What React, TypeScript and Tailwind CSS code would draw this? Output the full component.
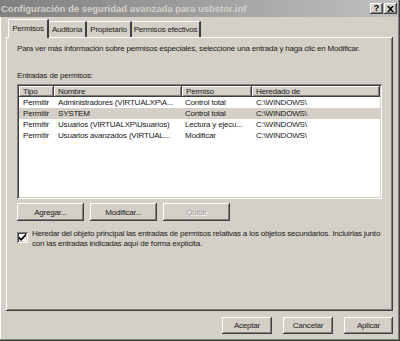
import React from 'react';

const raised =
  'shadow-[inset_-1px_-1px_#404040,inset_1px_1px_#ffffff,inset_-2px_-2px_#808080,inset_2px_2px_#d4d0c8]';
const sunken =
  'shadow-[inset_1px_1px_#808080,inset_-1px_-1px_#ffffff,inset_2px_2px_#404040,inset_-2px_-2px_#d4d0c8]';

const rows = [
  { tipo: 'Permitir', nombre: 'Administradores (VIRTUALXP\\A...', permiso: 'Control total', heredado: 'C:\\WINDOWS\\' },
  { tipo: 'Permitir', nombre: 'SYSTEM', permiso: 'Control total', heredado: 'C:\\WINDOWS\\', selected: true },
  { tipo: 'Permitir', nombre: 'Usuarios (VIRTUALXP\\Usuarios)', permiso: 'Lectura y ejecu...', heredado: 'C:\\WINDOWS\\' },
  { tipo: 'Permitir', nombre: 'Usuarios avanzados (VIRTUAL...', permiso: 'Modificar', heredado: 'C:\\WINDOWS\\' },
];

const cols = [
  { label: 'Tipo', w: 'w-[35px]' },
  { label: 'Nombre', w: 'w-[128px]' },
  { label: 'Permiso', w: 'w-[70px]' },
  { label: 'Heredado de', w: 'flex-1' },
];

const tabs = [
  { label: 'Auditoría', w: 'w-[38px]' },
  { label: 'Propietario', w: 'w-[45px]' },
  { label: 'Permisos efectivos', w: 'w-[69px]' },
];

function Button({ label, disabled, className }: { label: string; disabled?: boolean; className: string }) {
  return (
    <div className={`flex items-center justify-center bg-[#d4d0c8] ${raised} ${className}`}>
      {disabled ? (
        <span className="text-[#a0a0a0] [text-shadow:1px_1px_#ffffff]">{label}</span>
      ) : (
        <span>{label}</span>
      )}
    </div>
  );
}

function TitleButton({ children }: { children: React.ReactNode }) {
  return (
    <div className={`w-[13px] h-[11px] bg-[#d4d0c8] flex items-center justify-center ${raised}`}>
      {children}
    </div>
  );
}

export default function App() {
  return (
    <div
      className="w-[400px] h-[341px] bg-[#d4d0c8] overflow-hidden text-[8px] leading-[11px] tracking-[-0.2px] text-[#202020] shadow-[inset_-1px_-1px_#404040,inset_-2px_-2px_#808080,inset_1px_0_#ffffff]"
      style={{ fontFamily: '"Liberation Sans", Arial, sans-serif' }}
    >
      {/* Title bar */}
      <div className="h-[17px] mr-[2px] flex items-center bg-gradient-to-r from-[#808080] to-[#c0c0c0] pl-[1px] pr-[1px]">
        <span className="font-bold text-[9.5px] tracking-[0px] text-[#d4d0c8] flex-1 whitespace-nowrap">
          Configuración de seguridad avanzada para usbstor.inf
        </span>
        <div className="flex gap-[1px]">
          <TitleButton>
            <span className="font-bold text-[9px] leading-none text-black">?</span>
          </TitleButton>
          <TitleButton>
            <svg width="7" height="6" viewBox="0 0 7 6">
              <path d="M0 0h1.8l1.7 1.8L5.2 0H7L4.4 3 7 6H5.2L3.5 4.2 1.8 6H0l2.6-3z" fill="#000" />
            </svg>
          </TitleButton>
        </div>
      </div>

      {/* Tabs */}
      <div className="flex items-end h-[19px] pl-[8px] mt-[1px]">
        <div className="h-[19px] w-[41px] text-center pt-[3px] bg-[#d4d0c8] border-l border-t border-white border-r-2 border-r-[#404040] relative z-10 -mb-[1px]">
          Permisos
        </div>
        {tabs.map((t) => (
          <div
            key={t.label}
            className={`h-[16px] ${t.w} text-center pt-[2px] border-t border-white border-r-2 border-r-[#404040] whitespace-nowrap`}
          >
            {t.label}
          </div>
        ))}
      </div>

      {/* Panel */}
      <div className="ml-[6px] mr-[7px] h-[274px] bg-[#d4d0c8] shadow-[inset_-1px_-1px_#404040,inset_1px_1px_#ffffff,inset_-2px_-2px_#808080] pl-[11px] pr-[10px] pt-[6px]">
        <div className="whitespace-nowrap">
          Para ver más información sobre permisos especiales, seleccione una entrada y haga clic en Modificar.
        </div>
        <div className="mt-[16px]">Entradas de permisos:</div>
        <div className={`mt-[3px] w-[365px] h-[115px] bg-white p-[2px] ${sunken}`}>
          <div className="flex h-[11px] leading-[11px]">
            {cols.map((c) => (
              <div key={c.label} className={`${c.w} bg-[#d4d0c8] pl-[4px] ${raised}`}>
                {c.label}
              </div>
            ))}
          </div>
          {rows.map((r) => (
            <div
              key={r.nombre}
              className={`flex h-[11px] whitespace-nowrap ${r.selected ? 'bg-[#d4d0c8]' : ''}`}
            >
              <div className="w-[35px] pl-[4px]">{r.tipo}</div>
              <div className="w-[128px] pl-[4px]">{r.nombre}</div>
              <div className="w-[70px] pl-[3px] overflow-hidden">{r.permiso}</div>
              <div className="flex-1 pl-[4px]">{r.heredado}</div>
            </div>
          ))}
        </div>
        <div className="flex gap-[6px] mt-[4px]">
          <Button label="Agregar..." className="w-[67px] h-[18px]" />
          <Button label="Modificar..." className="w-[67px] h-[18px]" />
          <Button label="Quitar" disabled className="w-[67px] h-[18px]" />
        </div>
        <div className="flex mt-[8px] gap-[4px]">
          <div className={`w-[11px] h-[11px] shrink-0 bg-white mt-[3px] flex items-center justify-center ${sunken}`}>
            <svg width="7" height="7" viewBox="0 0 7 7">
              <path d="M0 2.5v2.5l2 2 5-5V-0.5L2 4.5z" fill="#000" />
            </svg>
          </div>
          <div className="leading-[10px] whitespace-nowrap">
            Heredar del objeto principal las entradas de permisos relativas a los objetos secundarios. Incluirlas junto
            <br />
            con las entradas indicadas aquí de forma explícita.
          </div>
        </div>
      </div>

      {/* Bottom buttons */}
      <div className="flex justify-end gap-[11px] pr-[7px] mt-[6px]">
        <Button label="Aceptar" className="w-[50px] h-[17px]" />
        <Button label="Cancelar" className="w-[50px] h-[17px]" />
        <Button label="Aplicar" className="w-[49px] h-[17px]" />
      </div>
    </div>
  );
}
